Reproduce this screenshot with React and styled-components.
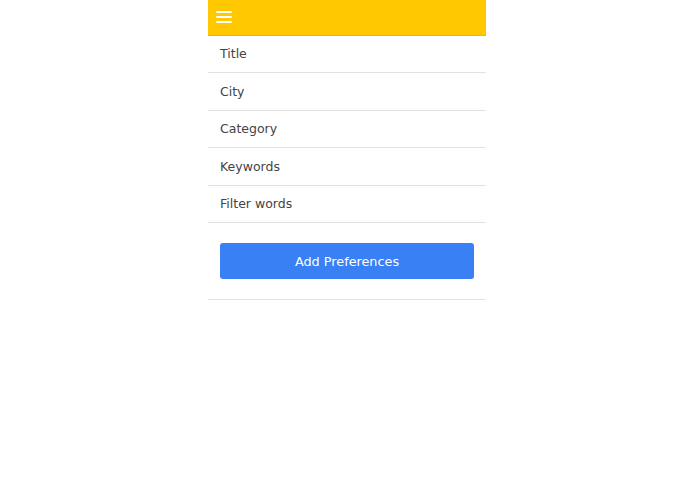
import React from "react";
import styled, { createGlobalStyle } from "styled-components";

const GlobalStyle = createGlobalStyle`
  html, body {
    margin: 0;
    padding: 0;
    background: #ffffff;
  }
  body {
    font-family: "DejaVu Sans", Verdana, sans-serif;
  }
`;

const Page = styled.div`
  display: flex;
  justify-content: center;
  padding-right: 1px;
`;

const Panel = styled.div`
  width: 278px;
  display: flex;
  flex-direction: column;
`;

const Header = styled.header`
  height: 34.5px;
  background-color: #ffc800;
  border-bottom: 1px solid #e9b800;
  display: flex;
  align-items: center;
  padding: 0 8px;
`;

const MenuButton = styled.button`
  width: 16px;
  height: 12px;
  padding: 0;
  border: none;
  background: transparent;
  display: flex;
  flex-direction: column;
  justify-content: space-between;
  cursor: pointer;
  span {
    display: block;
    height: 2px;
    background: #ffffff;
    border-radius: 1px;
  }
`;

const Item = styled.div`
  height: 36.5px;
  border-bottom: 1px solid #e2e2e2;
  display: flex;
  align-items: center;
  padding: 0 12px;
  font-size: 12.5px;
  color: #444444;
`;

const Footer = styled.div`
  padding: 20px 12px 19.5px;
  border-bottom: 1px solid #e2e2e2;
`;

const PrimaryButton = styled.button`
  width: 100%;
  height: 36px;
  border: none;
  border-radius: 3px;
  background-color: #3880f4;
  color: #ffffff;
  font-family: inherit;
  font-size: 12.8px;
  cursor: pointer;
`;

const fields = ["Title", "City", "Category", "Keywords", "Filter words"];

export default function App() {
  return (
    <>
      <GlobalStyle />
      <Page>
        <Panel>
          <Header>
            <MenuButton aria-label="menu">
              <span />
              <span />
              <span />
            </MenuButton>
          </Header>
          {fields.map(f => (
            <Item key={f}>{f}</Item>
          ))}
          <Footer>
            <PrimaryButton>Add Preferences</PrimaryButton>
          </Footer>
        </Panel>
      </Page>
    </>
  );
}
